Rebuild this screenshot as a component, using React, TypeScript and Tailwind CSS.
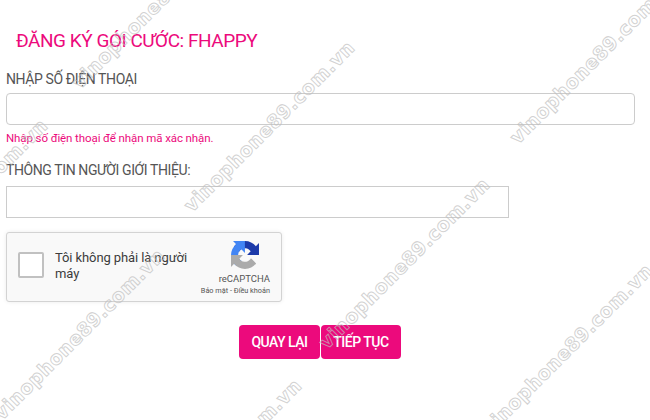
const marks = [
  "left-[75px] top-[72px]",
  "left-[187px] top-[195px]",
  "left-[513px] top-[127px]",
  "left-[-120px] top-[273px]",
  "left-[-3px] top-[403px]",
  "left-[322px] top-[332px]",
  "left-[134px] top-[533px]",
  "left-[485px] top-[418px]",
];

function Watermark({ pos }: { pos: string }) {
  return (
    <div
      className={`absolute ${pos} h-[26px] origin-[0_50%] -rotate-45 whitespace-nowrap font-['DejaVu_Sans',sans-serif] text-[19px] leading-[26px] font-bold tracking-[0.5px] text-transparent [-webkit-text-stroke:1px_rgba(190,190,190,0.7)] pointer-events-none`}
    >
      vinophone89.com.vn
    </div>
  );
}

function RecaptchaLogo() {
  return (
    <svg viewBox="0 0 64 64" className="mr-[11px] w-[28px] h-[28px]">
      <path fill="#1c3aa9" d="M64 31.955l-.033-1.37V4.687l-7.16 7.16C50.948 4.674 42.033.093 32.05.093c-10.4 0-19.622 4.96-25.458 12.64l11.736 11.86c1.15-2.127 2.784-3.955 4.754-5.33 2.05-1.6 4.952-2.91 8.968-2.91.485 0 .86.057 1.135.163 4.976.393 9.288 3.14 11.828 7.124l-8.307 8.307c10.52-.04 22.4-.066 27.295.005" />
      <path fill="#4285f4" d="M31.9.002l-1.37.033H4.632l7.16 7.16C4.62 13.054.04 21.97.04 31.95c0 10.4 4.96 19.622 12.64 25.458l11.86-11.736c-2.127-1.15-3.955-2.784-5.33-4.754-1.6-2.05-2.91-4.952-2.91-8.968 0-.485.057-.86.163-1.135.393-4.976 3.14-9.288 7.124-11.828l8.307 8.307c-.04-10.52-.066-22.4.005-27.295" />
      <path fill="#ababab" d="M.002 32l.033 1.37v25.898l7.16-7.16c5.86 7.173 14.775 11.754 24.76 11.754 10.4 0 19.622-4.96 25.458-12.64l-11.736-11.86c-1.15 2.127-2.784 3.955-4.754 5.33-2.05 1.6-4.952 2.91-8.968 2.91-.485 0-.86-.057-1.135-.163-4.976-.393-9.288-3.14-11.828-7.124l8.307-8.307c-10.52.04-22.4.066-27.295-.005" />
    </svg>
  );
}

export default function App() {
  return (
    <div className="relative w-[650px] h-[420px] overflow-hidden bg-white font-['Roboto',sans-serif] text-[#555]">
      <div className="flex flex-col pl-[6px] pr-[15px] pt-[29px]">
        <h2 className="pl-[10px] text-[19px] leading-[24px] tracking-[-0.47px] text-[#ec0a7c]">ĐĂNG KÝ GÓI CƯỚC: FHAPPY</h2>

        <label className="mt-[16px] text-[14px] leading-[20px] tracking-[-0.4px]">NHẬP SỐ ĐIỆN THOẠI</label>
        <input className="mt-[4px] w-[629px] h-[32px] rounded-[4px] border border-[#ccc] bg-white" />
        <p className="mt-[5px] text-[11.5px] leading-[16px] tracking-[-0.1px] text-[#ec0a7c]">Nhập số điện thoại để nhận mã xác nhận.</p>

        <label className="mt-[14px] text-[14px] leading-[20px] tracking-[-0.4px]">THÔNG TIN NGƯỜI GIỚI THIỆU:</label>
        <input className="mt-[6px] w-[503px] h-[32px] border border-[#ccc] bg-white" />

        <div className="mt-[14px] flex w-[276px] h-[70px] rounded-[3px] border border-[#d3d3d3] bg-[#f9f9f9] shadow-[0_0_4px_rgba(0,0,0,0.08)]">
          <div className="ml-[11px] mt-[19px] w-[26px] h-[26px] shrink-0 rounded-[2px] border-2 border-[#c1c1c1] bg-white" />
          <div className="ml-[11px] mt-[17px] w-[140px] text-[13px] leading-[16px] tracking-[-0.1px] text-[#3c3c3c]">Tôi không phải là người máy</div>
          <div className="flex flex-1 flex-col items-end pt-[8px] pr-[11px]">
            <RecaptchaLogo />
            <div className="mt-[4px] text-[9.5px] leading-[12px] text-[#555]">reCAPTCHA</div>
            <div className="mt-[1px] whitespace-nowrap text-[7.3px] leading-[10px] text-[#555]">Bảo mật - Điều khoản</div>
          </div>
        </div>

        <div className="mt-[23px] flex justify-center gap-[1px] pr-[1px]">
          <button className="w-[81px] h-[34px] rounded-[4px] bg-[#ec0a7c] text-[14px] tracking-[-0.5px] font-medium text-white">QUAY LẠI</button>
          <button className="w-[80px] h-[34px] rounded-[4px] bg-[#ec0a7c] text-[14px] tracking-[-0.5px] font-medium text-white">TIẾP TỤC</button>
        </div>
      </div>

      {marks.map((m) => (
        <Watermark key={m} pos={m} />
      ))}
    </div>
  );
}
